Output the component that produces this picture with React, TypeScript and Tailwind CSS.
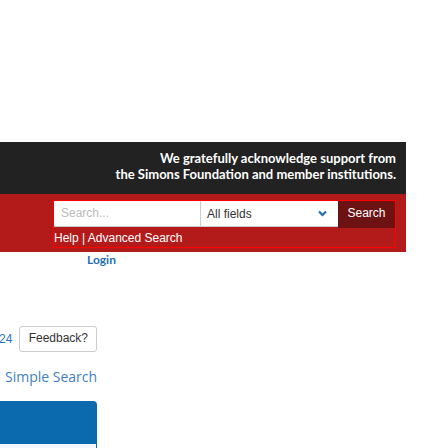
import React from "react";

const sans = "font-['Liberation_Sans',Arial,sans-serif]";
const open = "font-['Open_Sans',sans-serif]";
const lato = "font-['Lato',sans-serif]";

export default function App() {
    return (
        <div className="w-[448px] h-[448px] overflow-hidden bg-white pt-[142px]">
            {/* masthead */}
            <div className="w-[406px]">
                <div className={`h-[52px] bg-[#222222] pt-[8px] pr-[10px] text-right text-white text-[13px] leading-[16px] font-bold ${lato}`}>
                    <div>We gratefully acknowledge support from</div>
                    <div>the Simons Foundation and member institutions.</div>
                </div>
                <div className="h-[58px] bg-[#b31b1b] pl-[54px] pt-[7px]">
                    <div className={`w-[341px] h-[46px] outline outline-1 outline-[#ff0000] ${sans}`}>
                        <div className="grid grid-cols-[147px_137px_57px] h-[27px]">
                            <div className="h-[26px] bg-white border-b border-r border-[#cccccc] pl-[7px] text-[12px] leading-[25px] text-[#bbbbbb]">
                                Search...
                            </div>
                            <div className="h-[26px] bg-white border-b border-[#cccccc] pl-[6px] flex items-center text-[12px] text-[#333333]">
                                <span className="w-[111px]">All fields</span>
                                <svg width="9" height="7" viewBox="0 0 9 7">
                                    <path d="M1 1.5 L4.5 5 L8 1.5" fill="none" stroke="#1f6fb2" strokeWidth="2.2" />
                                </svg>
                            </div>
                            <div className="h-[27px] bg-[#6c1213] text-white text-[12px] leading-[24px] text-center">
                                Search
                            </div>
                        </div>
                        <div className="mt-[3px] text-white text-[12px] leading-[14px]">Help | Advanced Search</div>
                    </div>
                </div>
            </div>
            <div className={`pl-[87px] text-[12px] leading-[16px] font-bold text-[#1f70b6] ${lato}`}>Login</div>

            {/* feedback row */}
            <div className={`mt-[58px] flex items-center ${sans}`}>
                <span className="text-[12px] text-[#2a78bf] -ml-[1px]">24</span>
                <div className="ml-[7px] w-[78px] h-[26px] border border-[#cccccc] rounded-[3px] text-[12px] leading-[22px] text-center text-[#333333]">
                    Feedback?
                </div>
            </div>

            <div className={`mt-[15px] pl-[5px] text-[14px] leading-[20px] text-[#3f7fc1] ${open}`}>Simple Search</div>

            <div className="mt-[14px] w-[97px]">
                <div className="h-[43px] bg-[#0b69ad] rounded-tr-[4px]" />
                <div className="h-[10px] bg-[#f3f8fc] border-r border-[#0b69ad]" />
            </div>
        </div>
    );
}
